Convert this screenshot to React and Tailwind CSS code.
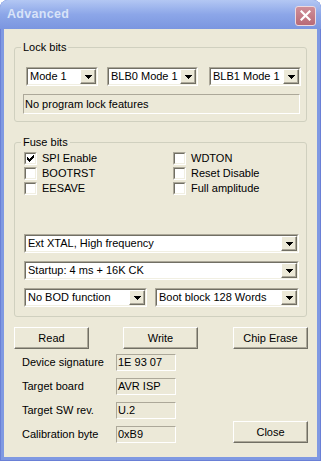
import React from "react";

// XP-ish 3D edges
const raised =
  "border border-t-white border-l-white border-b-[#716f64] border-r-[#716f64] shadow-[inset_-1px_-1px_0_#aca899]";
const sunkenOuter =
  "border border-t-[#aca899] border-l-[#aca899] border-b-white border-r-white";
const sunkenInner =
  "border border-t-[#716f64] border-l-[#716f64] border-b-[#f1efe2] border-r-[#f1efe2]";

const Arrow = () => (
  <svg width="7" height="4" viewBox="0 0 7 4" shapeRendering="crispEdges">
    <rect x="0" y="0" width="7" height="1" fill="#000" />
    <rect x="1" y="1" width="5" height="1" fill="#000" />
    <rect x="2" y="2" width="3" height="1" fill="#000" />
    <rect x="3" y="3" width="1" height="1" fill="#000" />
  </svg>
);

const CheckMark = () => (
  <svg width="7" height="7" viewBox="0 0 7 7" shapeRendering="crispEdges">
    <path
      d="M6 0h1v3H6v1H5v1H4v1H3v1H2V6H1V5H0V2h1v1h1v1h1V3h1V2h1V1h1z"
      fill="#000"
    />
  </svg>
);

const Combo = ({ value, className }) => (
  <div className={`${sunkenOuter} h-[19px] ${className}`}>
    <div className={`${sunkenInner} h-full bg-white flex`}>
      <span className="flex-1 pl-[2px] leading-[15px] truncate">{value}</span>
      <div
        className={`${raised} w-[16px] h-full bg-[#ece9d8] flex items-center justify-center`}
      >
        <Arrow />
      </div>
    </div>
  </div>
);

const Check = ({ label, checked }) => (
  <div className="flex items-center h-[15px]">
    <div className={`${sunkenOuter} w-[13px] h-[13px]`}>
      <div
        className={`${sunkenInner} w-full h-full bg-white flex items-center justify-center`}
      >
        {checked && <CheckMark />}
      </div>
    </div>
    <span className="ml-[5px] leading-[13px]">{label}</span>
  </div>
);

const Button = ({ children, className }) => (
  <div
    className={`${raised} w-[75px] h-[22px] flex items-center justify-center ${className}`}
  >
    {children}
  </div>
);

const InfoRow = ({ label, value }) => (
  <div className="flex items-center h-[17px]">
    <span className="w-[94px]">{label}</span>
    <div className={`${sunkenOuter} w-[60px] h-[17px] pl-[1px] leading-[15px]`}>
      {value}
    </div>
  </div>
);

const App = () => {
  return (
    <div className="w-[321px] h-[461px] bg-white">
      <div className="w-full h-full flex flex-col rounded-t-[8px] bg-[#7f99e2] shadow-[inset_1px_0_0_#6a80d6,inset_-1px_0_0_#6a80d6,inset_0_-1px_0_#6a80d6] font-['Liberation_Sans',Arial,sans-serif] text-[11px] text-black">
        {/* title bar */}
        <div className="h-[29px] shrink-0 flex items-center rounded-t-[8px] bg-gradient-to-b from-[#b3c7f3] via-[#8ca6e8] to-[#7b96e0] pl-[7px] pr-[5px]">
          <span className="flex-1 font-bold text-[12.5px] text-[#d8e3f8] tracking-[0.3px]">
            Advanced
          </span>
          <div className="w-[21px] h-[20px] mt-[2px] rounded-[3px] border border-[#eed9dd] bg-gradient-to-b from-[#cf8f99] to-[#b86a77] flex items-center justify-center">
            <svg width="11" height="11" viewBox="0 0 11 11">
              <path
                d="M1.5 1.5l8 8M9.5 1.5l-8 8"
                stroke="#fff"
                strokeWidth="2.2"
                strokeLinecap="square"
              />
            </svg>
          </div>
        </div>

        {/* client area */}
        <div className="flex-1 mx-[4px] mb-[4px] bg-[#ece9d8] flex flex-col">
          <fieldset className="ml-[10px] mt-[12px] w-[293px] h-[81px] border border-[#d0d0bf] rounded-[3px]">
            <legend className="ml-[6px] px-[2px] leading-[13px]">Lock bits</legend>
            <div className="flex pt-[13px] pl-[11px]">
              <Combo value="Mode 1" className="w-[72px]" />
              <Combo value="BLB0 Mode 1" className="w-[91px] ml-[9px]" />
              <Combo value="BLB1 Mode 1" className="w-[92px] ml-[11px]" />
            </div>
            <div
              className={`${sunkenOuter} ml-[8px] mt-[8px] w-[277px] h-[20px] pl-[1px] leading-[18px]`}
            >
              No program lock features
            </div>
          </fieldset>

          <fieldset className="ml-[10px] mt-[14px] w-[293px] h-[181px] border border-[#d0d0bf] rounded-[3px]">
            <legend className="ml-[6px] px-[2px] leading-[13px]">Fuse bits</legend>
            <div className="grid grid-cols-[149px_1fr] pl-[9px] pt-[2px]">
              <Check label="SPI Enable" checked />
              <Check label="WDTON" />
              <Check label="BOOTRST" />
              <Check label="Reset Disable" />
              <Check label="EESAVE" />
              <Check label="Full amplitude" />
            </div>
            <div className="pl-[9px] mt-[38px] flex flex-col gap-[8px]">
              <Combo value="Ext XTAL, High frequency" className="w-[275px]" />
              <Combo value="Startup: 4 ms + 16K CK" className="w-[275px]" />
              <div className="flex gap-[8px]">
                <Combo value="No BOD function" className="w-[123px]" />
                <Combo value="Boot block 128 Words" className="w-[144px]" />
              </div>
            </div>
          </fieldset>

          <div className="flex ml-[10px] mt-[10px]">
            <Button>Read</Button>
            <Button className="ml-[34px]">Write</Button>
            <Button className="ml-[35px]">Chip Erase</Button>
          </div>

          <div className="flex items-end mt-[5px]">
            <div className="ml-[18px] flex flex-col gap-[7px]">
              <InfoRow label="Device signature" value="1E 93 07" />
              <InfoRow label="Target board" value="AVR ISP" />
              <InfoRow label="Target SW rev." value="U.2" />
              <InfoRow label="Calibration byte" value="0xB9" />
            </div>
            <Button className="ml-[57px]">Close</Button>
          </div>
        </div>
      </div>
    </div>
  );
};

export default App;
